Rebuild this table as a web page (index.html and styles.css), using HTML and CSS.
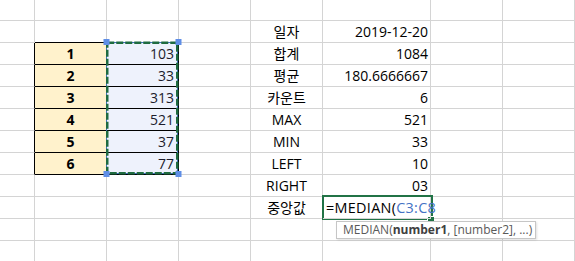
FILE: index.html
```html
<!DOCTYPE html>
<html lang="ko">
<head>
<meta charset="utf-8">
<title>Sheet</title>
<link rel="stylesheet" href="styles.css">
</head>
<body>
<div class="sheet">
  <div class="grid">
    <!-- row 1 -->
    <div class="c"></div><div class="c"></div><div class="c"></div><div class="c"></div><div class="c"></div><div class="c"></div><div class="c"></div><div class="c"></div>
    <!-- row 2 -->
    <div class="c"></div><div class="c tb"></div><div class="c tb"></div><div class="c"></div><div class="c lbl">일자</div><div class="c num">2019-12-20</div><div class="c"></div><div class="c"></div>
    <!-- row 3 -->
    <div class="c tl"></div><div class="c key">1</div><div class="c val">103</div><div class="c"></div><div class="c lbl">합계</div><div class="c num">1084</div><div class="c"></div><div class="c"></div>
    <!-- row 4 -->
    <div class="c tl"></div><div class="c key">2</div><div class="c val">33</div><div class="c"></div><div class="c lbl">평균</div><div class="c num">180.6666667</div><div class="c"></div><div class="c"></div>
    <!-- row 5 -->
    <div class="c tl"></div><div class="c key">3</div><div class="c val">313</div><div class="c"></div><div class="c lbl">카운트</div><div class="c num">6</div><div class="c"></div><div class="c"></div>
    <!-- row 6 -->
    <div class="c tl"></div><div class="c key">4</div><div class="c val">521</div><div class="c"></div><div class="c lbl">MAX</div><div class="c num">521</div><div class="c"></div><div class="c"></div>
    <!-- row 7 -->
    <div class="c tl"></div><div class="c key">5</div><div class="c val">37</div><div class="c"></div><div class="c lbl">MIN</div><div class="c num">33</div><div class="c"></div><div class="c"></div>
    <!-- row 8 -->
    <div class="c tl"></div><div class="c key">6</div><div class="c val">77</div><div class="c"></div><div class="c lbl">LEFT</div><div class="c num">10</div><div class="c"></div><div class="c"></div>
    <!-- row 9 -->
    <div class="c"></div><div class="c"></div><div class="c"></div><div class="c"></div><div class="c lbl">RIGHT</div><div class="c num">03</div><div class="c"></div><div class="c"></div>
    <!-- row 10 -->
    <div class="c"></div><div class="c"></div><div class="c"></div><div class="c"></div><div class="c lbl">중앙값</div><div class="c edit"><span class="f-black">=MEDIAN(</span><span class="f-ref">C3:C8</span><span class="caret"></span></div><div class="c"></div><div class="c"></div>
    <!-- row 11 -->
    <div class="c"></div><div class="c"></div><div class="c"></div><div class="c"></div><div class="c"></div><div class="c"></div><div class="c"></div><div class="c"></div>
    <!-- row 12 -->
    <div class="c"></div><div class="c"></div><div class="c"></div><div class="c"></div><div class="c"></div><div class="c"></div><div class="c"></div><div class="c"></div>
  </div>

  <svg class="range" width="84" height="144" viewBox="0 0 84 144">
    <rect x="6.5" y="6.5" width="71" height="131" fill="none" stroke="#4472c4" stroke-width="1"/>
    <rect x="7.25" y="6.75" width="70" height="130.5" fill="none" stroke="#1f6b40" stroke-width="2.5" stroke-dasharray="7 2"/>
    <rect x="3.5" y="3" width="6" height="6" fill="#5f8ee6"/>
    <rect x="75.5" y="3" width="6" height="6" fill="#5f8ee6"/>
    <rect x="3.5" y="135" width="6" height="6" fill="#5f8ee6"/>
    <rect x="75.5" y="135" width="6" height="6" fill="#5f8ee6"/>
  </svg>

  <div class="active"></div>
  <div class="fill-handle"></div>

  <div class="tip">MEDIAN(<b>number1</b>, [number2], ...)</div>
</div>
</body>
</html>
```

FILE: styles.css
```css
html, body {
  margin: 0;
  padding: 0;
  background: #ffffff;
  overflow: hidden;
}

.sheet {
  position: relative;
  width: 575px;
  height: 261px;
  overflow: hidden;
  font-family: "Open Sans", "Noto Sans CJK KR", sans-serif;
  font-size: 14px;
  color: #000;
}

.grid {
  display: grid;
  grid-template-columns: 35px 72px 72px 72px 72px 108px 72px 72px;
  grid-template-rows: 21px repeat(11, 22px);
}

.c {
  box-sizing: border-box;
  border-right: 1px solid #d4d4d4;
  border-bottom: 1px solid #d4d4d4;
  display: flex;
  align-items: flex-end;
  line-height: 20px;
  white-space: nowrap;
  min-width: 0;
}

.lbl {
  justify-content: center;
}

.num {
  justify-content: flex-end;
  padding-right: 2px;
}

.tb {
  border-bottom-color: #000;
}

.tl {
  border-right-color: #000;
}

.key {
  background: #fff2cc;
  border-right-color: #000;
  border-bottom-color: #000;
  justify-content: center;
  font-weight: 700;
}

.val {
  background: #eef2fc;
  border-right-color: #000;
  border-bottom-color: #000;
  justify-content: flex-end;
  padding-right: 4px;
  color: #1c1c2c;
}

.edit {
  overflow: visible;
  padding-left: 3px;
  position: relative;
  z-index: 3;
  font-size: 14.4px;
  letter-spacing: 0.3px;
}

.f-black {
  color: #000;
}

.f-ref {
  color: #4472c4;
}

.caret {
  display: inline-block;
  width: 1px;
  height: 19px;
  background: #000;
  margin-left: 1px;
  align-self: flex-end;
  margin-bottom: 1px;
}

.range {
  position: absolute;
  left: 100px;
  top: 36px;
}

.active {
  position: absolute;
  left: 322px;
  top: 195px;
  width: 111px;
  height: 25px;
  box-sizing: border-box;
  border: 2px solid #217346;
  z-index: 2;
}

.fill-handle {
  position: absolute;
  left: 427px;
  top: 216px;
  width: 7px;
  height: 6px;
  box-sizing: border-box;
  background: #217346;
  border-left: 1px solid #fff;
  border-top: 1px solid #fff;
  z-index: 2;
}

.tip {
  position: absolute;
  left: 336px;
  top: 221px;
  width: 200px;
  height: 18px;
  box-sizing: border-box;
  background: #fff;
  border: 1px solid #c6c6c6;
  box-shadow: 1px 1px 2px rgba(0, 0, 0, 0.12);
  font-size: 12px;
  line-height: 16px;
  color: #595959;
  padding-left: 6px;
  white-space: nowrap;
  z-index: 4;
}

.tip b {
  color: #404040;
  font-weight: 700;
}
```
